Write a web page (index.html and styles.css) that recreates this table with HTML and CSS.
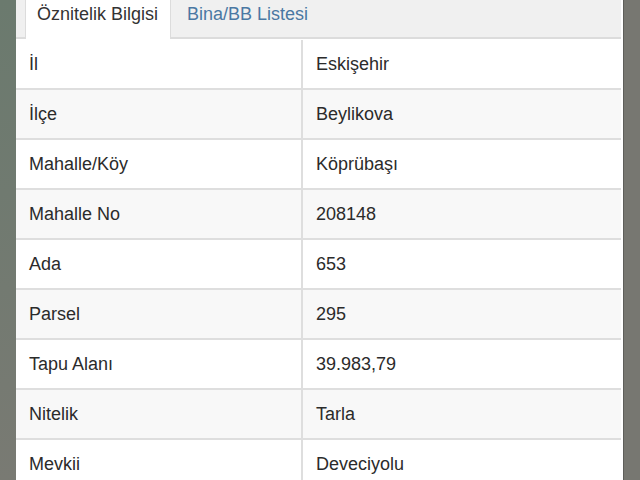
FILE: index.html
```html
<!DOCTYPE html>
<html lang="tr">
<head>
<meta charset="utf-8">
<link rel="stylesheet" href="styles.css">
</head>
<body>
<div class="screen">
  <div class="side side-left"></div>
  <div class="panel">
    <ul class="tabs">
      <li class="tab active">Öznitelik Bilgisi</li>
      <li class="tab">Bina/BB Listesi</li>
    </ul>
    <table class="attrs">
      <tbody>
        <tr><td>İl</td><td>Eskişehir</td></tr>
        <tr><td>İlçe</td><td>Beylikova</td></tr>
        <tr><td>Mahalle/Köy</td><td>Köprübaşı</td></tr>
        <tr><td>Mahalle No</td><td>208148</td></tr>
        <tr><td>Ada</td><td>653</td></tr>
        <tr><td>Parsel</td><td>295</td></tr>
        <tr><td>Tapu Alanı</td><td>39.983,79</td></tr>
        <tr><td>Nitelik</td><td>Tarla</td></tr>
        <tr><td>Mevkii</td><td>Deveciyolu</td></tr>
      </tbody>
    </table>
  </div>
  <div class="side side-right"></div>
</div>
</body>
</html>
```
FILE: styles.css
```css
html, body {
  margin: 0;
  padding: 0;
  height: 480px;
  overflow: hidden;
}
body {
  font-family: "Liberation Sans", Arial, sans-serif;
  color: #2a2a2a;
}
.screen {
  display: flex;
  height: 480px;
}
.side {
  flex: none;
}
.side-left {
  width: 16px;
  background: linear-gradient(#6b7a6e 0%, #707a70 40%, #797a73 100%);
}
.side-right {
  width: 16px;
  margin-left: 2px;
  border-left: 1px solid #5e5e5a;
  background: #777771;
}
.panel {
  flex: 1;
  background: #ffffff;
  display: flex;
  flex-direction: column;
}
.tabs {
  list-style: none;
  margin: 0;
  padding: 0 0 0 9px;
  height: 37px;
  background: #f0f0f0;
  border-bottom: 2px solid #dcdcdc;
  display: flex;
  flex: none;
}
.tab {
  font-size: 18px;
  line-height: 24px;
  padding: 2px 16px 0 16px;
  height: 37px;
  box-sizing: border-box;
  color: #4a78a3;
  white-space: nowrap;
}
.tab.active {
  background: #ffffff;
  color: #333333;
  width: 146px;
  padding: 2px 0 0 11px;
  border-left: 1px solid #dcdcdc;
  border-right: 1px solid #dcdcdc;
  height: 39px;
  margin-bottom: -2px;
  position: relative;
}
.attrs {
  width: 100%;
  border-collapse: collapse;
  font-size: 18px;
  margin-top: 1px;
}
.attrs td {
  height: 48px;
  padding: 0 13px;
  border-bottom: 2px solid #dedede;
  vertical-align: middle;
  color: #2b2b2b;
}
.attrs td:first-child {
  width: 259px;
  border-right: 2px solid #dedede;
}
.attrs tr:nth-child(even) td {
  background: #f8f8f8;
}
```
